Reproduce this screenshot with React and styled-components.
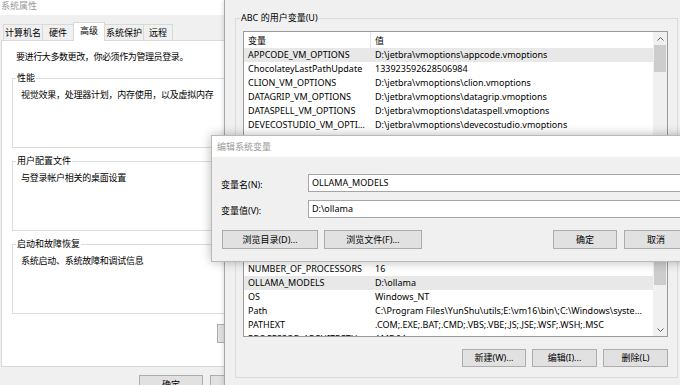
import React from "react";
import styled, { createGlobalStyle } from "styled-components";

const GlobalStyle = createGlobalStyle`
	html, body {
		margin: 0;
		padding: 0;
		background: #f0f0f0;
	}
	body {
		font-family: "Noto Sans", "Noto Sans CJK SC", sans-serif;
		font-size: 9px;
		color: #000;
	}
`;

const userVars = [
	["APPCODE_VM_OPTIONS", "D:\\jetbra\\vmoptions\\appcode.vmoptions"],
	["ChocolateyLastPathUpdate", "133923592628506984"],
	["CLION_VM_OPTIONS", "D:\\jetbra\\vmoptions\\clion.vmoptions"],
	["DATAGRIP_VM_OPTIONS", "D:\\jetbra\\vmoptions\\datagrip.vmoptions"],
	["DATASPELL_VM_OPTIONS", "D:\\jetbra\\vmoptions\\dataspell.vmoptions"],
	["DEVECOSTUDIO_VM_OPTIONS", "D:\\jetbra\\vmoptions\\devecostudio.vmoptions"],
	["GATEWAY_VM_OPTIONS", "D:\\jetbra\\vmoptions\\gateway.vmoptions"],
	["GOLAND_VM_OPTIONS", "D:\\jetbra\\vmoptions\\goland.vmoptions"],
];

const systemVars = [
	["ComSpec", "C:\\Windows\\system32\\cmd.exe"],
	["DriverData", "C:\\Windows\\System32\\Drivers\\DriverData"],
	["JAVA_HOME", "C:\\Program Files\\Java\\jdk-17"],
	["NUMBER_OF_PROCESSORS", "16"],
	["OLLAMA_MODELS", "D:\\ollama"],
	["OS", "Windows_NT"],
	["Path", "C:\\Program Files\\YunShu\\utils;E:\\vm16\\bin\\;C:\\Windows\\system32;C:\\Windows"],
	["PATHEXT", ".COM;.EXE;.BAT;.CMD;.VBS;.VBE;.JS;.JSE;.WSF;.WSH;.MSC"],
	["PROCESSOR_ARCHITECTURE", "AMD64"],
];

function Arrow({ down }) {
	return (
		<svg width="7" height="4" viewBox="0 0 7 4">
			<polyline
				points={down ? "0.5,0.5 3.5,3.5 6.5,0.5" : "0.5,3.5 3.5,0.5 6.5,3.5"}
				fill="none"
				stroke="#606060"
				strokeWidth="1"
			/>
		</svg>
	);
}

function VarList({ rows, selected, height, thumb }) {
	return (
		<ListBox $h={height}>
			<ListMain>
				<HeaderRow>
					<NameCell>变量</NameCell>
					<ValueCell $head>值</ValueCell>
				</HeaderRow>
				{rows.map(([name, value]) => (
					<Row key={name} $selected={name === selected}>
						<NameCell>{name}</NameCell>
						<ValueCell>{value}</ValueCell>
					</Row>
				))}
			</ListMain>
			<ScrollBar>
				<ArrowBox>
					<Arrow />
				</ArrowBox>
				<Track>
					<Thumb style={{ marginTop: thumb[0], height: thumb[1] }} />
				</Track>
				<ArrowBox>
					<Arrow down />
				</ArrowBox>
			</ScrollBar>
		</ListBox>
	);
}

export default function App() {
	return (
		<>
			<GlobalStyle />
			<Desktop>
				<Window $x={-8} $y={-5} $w={320} $h={400}>
					<TitleBar $h={20}>系统属性</TitleBar>
					<SysBody>
						<TabStrip>
							<Tab $w={40}>计算机名</Tab>
							<Tab $w={32}>硬件</Tab>
							<Tab $w={32} $active>高级</Tab>
							<Tab $w={40}>系统保护</Tab>
							<Tab $w={30}>远程</Tab>
						</TabStrip>
						<TabPanel>
							<Intro>要进行大多数更改，你必须作为管理员登录。</Intro>
							<Group $w={290} $h={76}>
								<Legend $shift={-5}>性能</Legend>
								<GroupText>视觉效果，处理器计划，内存使用，以及虚拟内存</GroupText>
							</Group>
							<Group $w={290} $h={76}>
								<Legend $shift={-5}>用户配置文件</Legend>
								<GroupText>与登录帐户相关的桌面设置</GroupText>
							</Group>
							<Group $w={290} $h={76}>
								<Legend $shift={-5}>启动和故障恢复</Legend>
								<GroupText>系统启动、系统故障和调试信息</GroupText>
							</Group>
							<EnvButtonRow>
								<Button $w={80}>环境变量(N)...</Button>
							</EnvButtonRow>
						</TabPanel>
						<DialogButtons>
							<Button $w={64}>确定</Button>
							<Button $w={64}>取消</Button>
							<Button $w={64}>应用(A)</Button>
						</DialogButtons>
					</SysBody>
				</Window>

				<EnvWindow $x={224} $y={0} $w={470} $h={390}>
					<Group $w={443} $pad="7px 9px 4px 7px">
						<Legend $shift={-3}>ABC 的用户变量(U)</Legend>
						<VarList rows={userVars} selected="APPCODE_VM_OPTIONS" height={118} thumb={[0, 27]} />
						<ButtonRow $mt={5}>
							<Button $w={64}>新建(N)...</Button>
							<Button $w={65}>编辑(E)...</Button>
							<Button $w={65}>删除(D)</Button>
						</ButtonRow>
					</Group>
					<Group $w={443} $pad="7px 9px 10px 7px" $mt={7}>
						<Legend $shift={-3}>系统变量(S)</Legend>
						<VarList rows={systemVars} selected="OLLAMA_MODELS" height={134} thumb={[13, 55]} />
						<ButtonRow $mt={12}>
							<Button $w={64}>新建(W)...</Button>
							<Button $w={65}>编辑(I)...</Button>
							<Button $w={65}>删除(L)</Button>
						</ButtonRow>
					</Group>
				</EnvWindow>

				<EditDialog $x={211} $y={135} $w={488}>
					<TitleBar $h={21} $pl={5}>编辑系统变量</TitleBar>
					<EditBody>
						<FormGrid>
							<FieldLabel>变量名(N):</FieldLabel>
							<TextInput>OLLAMA_MODELS</TextInput>
							<FieldLabel>变量值(V):</FieldLabel>
							<TextInput>D:\ollama</TextInput>
						</FormGrid>
						<EditButtons>
							<Button $w={96}>浏览目录(D)...</Button>
							<Button $w={98}>浏览文件(F)...</Button>
							<Spacer />
							<Button $w={64}>确定</Button>
							<Button $w={64}>取消</Button>
						</EditButtons>
					</EditBody>
				</EditDialog>
			</Desktop>
		</>
	);
}

const Desktop = styled.div`
	position: relative;
	width: 680px;
	height: 385px;
	overflow: hidden;
	background: #f0f0f0;
`;

const Window = styled.div`
	position: absolute;
	left: ${(p) => p.$x}px;
	top: ${(p) => p.$y}px;
	width: ${(p) => p.$w}px;
	height: ${(p) => p.$h}px;
	background: #f0f0f0;
	display: flex;
	flex-direction: column;
	box-sizing: border-box;
`;

const EnvWindow = styled(Window)`
	border-left: 1px solid #a8a8a8;
	box-shadow: -1px 0 4px rgba(0, 0, 0, 0.12);
	padding: 12px 0 0 10px;
`;

const EditDialog = styled(Window)`
	height: auto;
	border: 1px solid #b9b9b9;
	box-shadow: 0 0 10px rgba(0, 0, 0, 0.28);
`;

const TitleBar = styled.div`
	height: ${(p) => p.$h}px;
	line-height: ${(p) => p.$h + 1}px;
	padding-left: ${(p) => p.$pl ?? 9}px;
	background: #fff;
	color: #9a9a9a;
	font-size: 9px;
	flex-shrink: 0;
`;

const SysBody = styled.div`
	display: flex;
	flex-direction: column;
	padding: 7px 0 0 9px;
`;

const TabStrip = styled.div`
	display: flex;
	align-items: flex-end;
	height: 18px;
	margin-left: 2px;
`;

const Tab = styled.div`
	position: relative;
	box-sizing: border-box;
	width: ${(p) => p.$w}px;
	height: ${(p) => (p.$active ? 19 : 16)}px;
	margin-bottom: ${(p) => (p.$active ? -1 : 0)}px;
	line-height: ${(p) => (p.$active ? 16 : 15)}px;
	text-align: center;
	white-space: nowrap;
	background: ${(p) => (p.$active ? "#fff" : "#f0f0f0")};
	border: 1px solid #d9d9d9;
	border-bottom: none;
	margin-right: -1px;
	z-index: ${(p) => (p.$active ? 1 : 0)};
`;

const TabPanel = styled.div`
	box-sizing: border-box;
	height: 327px;
	background: #fff;
	border: 1px solid #d9d9d9;
	padding: 9px 0 0 10px;
	display: flex;
	flex-direction: column;
	align-items: flex-start;
`;

const Intro = styled.div`
	line-height: 14px;
	padding-left: 4px;
	margin-bottom: 8px;
	white-space: nowrap;
	letter-spacing: -0.4px;
`;

const Group = styled.fieldset`
	box-sizing: border-box;
	width: ${(p) => p.$w}px;
	height: ${(p) => (p.$h ? `${p.$h}px` : "auto")};
	margin: ${(p) => p.$mt ?? 0}px 0 0;
	padding: ${(p) => p.$pad ?? "4px 8px 0 8px"};
	border: 1px solid #dcdcdc;
	min-width: 0;

	& + & {
		margin-top: 7px;
	}
`;

const Legend = styled.legend`
	padding: 0 1px;
	margin-left: ${(p) => p.$shift}px;
	line-height: 12px;
	white-space: nowrap;
`;

const GroupText = styled.div`
	line-height: 14px;
	white-space: nowrap;
	letter-spacing: -0.25px;
`;

const EnvButtonRow = styled.div`
	margin-top: 10px;
	padding-left: 205px;
`;

const DialogButtons = styled.div`
	display: flex;
	gap: 7px;
	margin-top: 8px;
	padding-left: 138px;
`;

const Button = styled.div`
	box-sizing: border-box;
	width: ${(p) => p.$w}px;
	height: 19px;
	line-height: 17px;
	text-align: center;
	white-space: nowrap;
	background: #e1e1e1;
	border: 1px solid #adadad;
	flex-shrink: 0;
`;

const ButtonRow = styled.div`
	display: flex;
	justify-content: flex-end;
	gap: 6px;
	margin-top: ${(p) => p.$mt ?? 7}px;

	& > div {
		height: 18px;
		line-height: 16px;
	}
`;

const ListBox = styled.div`
	box-sizing: border-box;
	height: ${(p) => p.$h}px;
	border: 1px solid #9a9a9a;
	background: #fff;
	display: flex;
	overflow: hidden;
`;

const ListMain = styled.div`
	flex: 1;
	min-width: 0;
	display: flex;
	flex-direction: column;
`;

const HeaderRow = styled.div`
	display: flex;
	height: 16px;
	line-height: 17px;
	flex-shrink: 0;
`;

const Row = styled.div`
	display: flex;
	height: 14px;
	line-height: 14px;
	flex-shrink: 0;
	background: ${(p) => (p.$selected ? "#e8e8e8" : "transparent")};
`;

const NameCell = styled.div`
	box-sizing: border-box;
	width: 126px;
	padding: 0 4px;
	white-space: nowrap;
	overflow: hidden;
	text-overflow: ellipsis;
	flex-shrink: 0;
`;

const ValueCell = styled.div`
	box-sizing: border-box;
	flex: 1;
	min-width: 0;
	padding: 0 4px;
	white-space: nowrap;
	overflow: hidden;
	text-overflow: ellipsis;
	border-left: 1px solid ${(p) => (p.$head ? "#e5e5e5" : "transparent")};
`;

const ScrollBar = styled.div`
	width: 14px;
	background: #f0f0f0;
	display: flex;
	flex-direction: column;
	flex-shrink: 0;
`;

const ArrowBox = styled.div`
	height: 13px;
	display: flex;
	align-items: center;
	justify-content: center;
	flex-shrink: 0;
`;

const Track = styled.div`
	flex: 1;
	padding: 0 1px;
`;

const Thumb = styled.div`
	background: #cdcdcd;
`;

const EditBody = styled.div`
	padding: 17px 10px 12px 9px;
	display: flex;
	flex-direction: column;
`;

const FormGrid = styled.div`
	display: grid;
	grid-template-columns: 87px 1fr;
	row-gap: 8px;
	align-items: center;
`;

const FieldLabel = styled.div`
	white-space: nowrap;
	padding-top: 2px;
`;

const TextInput = styled.div`
	box-sizing: border-box;
	height: 18px;
	line-height: 16px;
	padding-left: 3px;
	background: #fff;
	border: 1px solid #a5a5a5;
	white-space: nowrap;
`;

const EditButtons = styled.div`
	display: flex;
	gap: 6px;
	margin-top: 12px;
	padding-left: 1px;

	& > div:last-child {
		margin-left: 1px;
	}
`;

const Spacer = styled.div`
	flex: 1;
`;
